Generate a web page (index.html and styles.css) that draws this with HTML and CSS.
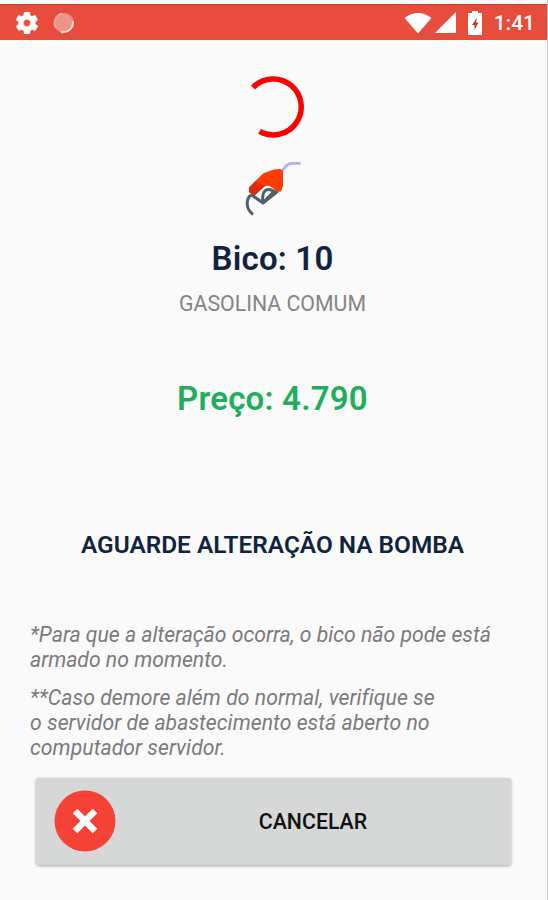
FILE: index.html
```html
<!DOCTYPE html>
<html lang="pt-BR">
  <head>
    <meta charset="UTF-8" />
    <meta name="viewport" content="width=device-width, initial-scale=1.0" />
    <title>Alteração de preço</title>
    <link rel="stylesheet" href="styles.css">
  </head>
  <body>
    <div class="screen">
      <header class="status-bar">
        <svg class="icon-gear" viewBox="2 2 20 20" width="22" height="22">
          <path fill="#fff" stroke="#fff" stroke-width=".5" d="M19.4 13c0-.3.1-.6.1-1s0-.7-.1-1l2.1-1.6c.2-.2.2-.4.1-.6l-2-3.5c-.1-.2-.4-.3-.6-.2l-2.5 1c-.5-.4-1.1-.7-1.7-1l-.4-2.6c0-.3-.2-.5-.5-.5h-4c-.2 0-.4.2-.5.4l-.4 2.7c-.6.2-1.1.6-1.7 1l-2.5-1c-.2-.1-.5 0-.6.2l-2 3.5c-.1.2-.1.5.1.6L4.5 11c0 .3-.1.6-.1 1s0 .7.1 1l-2.1 1.6c-.2.2-.2.4-.1.6l2 3.5c.1.2.4.3.6.2l2.5-1c.5.4 1.1.7 1.7 1l.4 2.6c0 .3.2.5.5.5h4c.2 0 .5-.2.5-.4l.4-2.7c.6-.2 1.2-.6 1.7-1l2.5 1c.2.1.5 0 .6-.2l2-3.5c.1-.2.1-.5-.1-.6L19.4 13zM12 15.3a3.3 3.3 0 1 1 0-6.6 3.3 3.3 0 0 1 0 6.6z" />
        </svg>
        <svg class="icon-sync" viewBox="0 0 22 22" width="22" height="22">
          <circle cx="11" cy="11" r="10" fill="#ee938a" />
          <path d="M20 9a10 10 0 0 1-12 11" fill="none" stroke="#ffd9d4" stroke-width="1.8" />
          <path d="M3 16A9.5 9.5 0 0 1 9 1.5" fill="none" stroke="#f2aaa3" stroke-width="1.5" />
        </svg>
        <div class="status-right">
          <svg class="icon-wifi" viewBox="0 0 28 22" width="28" height="22">
            <path fill="#fff" d="M.5 6Q14-4 27.5 6L14 21.5z" />
          </svg>
          <svg class="icon-signal" viewBox="0 0 21 21" width="21" height="21">
            <path fill="#fff" d="M21 0v21H0z" />
          </svg>
          <svg class="icon-battery" viewBox="0 0 14 24" width="14" height="24">
            <path fill="#fff" d="M4 0h6v2h3q1 0 1 1v20q0 1-1 1H1q-1 0-1-1V3q0-1 1-1h3z" />
            <path fill="#c0392b" d="M9 6.5L4 14h2.5v5l4-7.5H8z" />
          </svg>
          <span class="clock">1:41</span>
        </div>
      </header>

      <main class="content">
        <svg class="spinner" viewBox="0 0 62 62" width="62" height="62">
          <path d="M11 11.5A28 28 0 1 1 17.5 55.3" fill="none" stroke="#fe0000" stroke-width="5.5" />
        </svg>

        <svg class="nozzle" viewBox="0 0 58 56" width="58" height="56">
          <path d="M38 11L42.500 5.500Q44.500 3.300 47.500 3.300H56.500" fill="none" stroke="#b0b5e3" stroke-width="2.800" />
          <path d="M5 27.500L18 14.500Q20 12.500 23 12L30 9.500L36.500 9 39 11.500V26L37 31.500 33 32 28 27.500Q24 24.500 20 27L10 36 5 32z" fill="#fd3d04" />
          <path d="M5 27.500L11.500 21l9 5-10.500 10L5 32z" fill="#dc2b08" />
          <path d="M7 35Q3 38 3.200 44T9 54.500M7 34.500L19 43 33.500 31.500M18.700 42.500Q18 33 21.500 30.500t8.500 1L19 42.500" fill="none" stroke="#4f616d" stroke-width="3" stroke-linejoin="round" />
        </svg>

        <h1 class="pump">Bico: 10</h1>
        <p class="fuel">GASOLINA COMUM</p>
        <p class="price">Preço: 4.790</p>
        <h2 class="waiting">AGUARDE ALTERAÇÃO NA BOMBA</h2>

        <div class="notes">
          <p>*Para que a alteração ocorra, o bico não pode está<br>armado no momento.</p>
          <p>**Caso demore além do normal, verifique se<br>o servidor de abastecimento está aberto no<br>computador servidor.</p>
        </div>

        <button class="cancel" type="button">
          <svg class="cancel-icon" viewBox="0 0 62 62" width="62" height="62">
            <circle cx="31" cy="31" r="30.5" fill="#f44336" />
            <path d="M21 21l20 20m0-20l-20 20" stroke="#fff" stroke-width="6.5" />
          </svg>
          <span class="cancel-label">CANCELAR</span>
        </button>
      </main>
    </div>
  </body>
</html>
```

FILE: styles.css
```css
* {
  box-sizing: border-box;
}
body {
  margin: 0;
  font-family: Roboto, sans-serif;
  background-color: #fafafa;
}
.screen {
  height: 900px;
  padding-top: 4px;
  border-right: 1px solid #cfcbc9;
  overflow: hidden;
}
.status-bar {
  display: flex;
  align-items: center;
  height: 36px;
  padding: 0 12px 0 16px;
  background-color: #e74c3c;
  border-top: 1px solid #d33a2b;
}
.icon-sync {
  margin-left: 15px;
}
.status-right {
  display: flex;
  align-items: center;
  margin-left: auto;
  color: #fff;
}
.icon-signal {
  margin-left: 3px;
}
.icon-battery {
  margin-left: 12px;
}
.clock {
  margin-left: 12px;
  font-size: 21px;
  font-weight: 500;
}
.content {
  display: flex;
  flex-direction: column;
  align-items: center;
}
.spinner {
  margin-top: 36px;
  margin-right: 2px;
}
.nozzle {
  margin-top: 22px;
  margin-right: 2px;
}
.pump,
.fuel,
.price,
.waiting,
.notes p {
  margin: 0;
  white-space: nowrap;
}
.pump {
  margin-top: 23px;
  padding-right: 2px;
  line-height: 40px;
  font-size: 33px;
  font-weight: 600;
  letter-spacing: 0.2px;
  color: #10243e;
}
.fuel {
  margin-top: 12px;
  padding-right: 2px;
  line-height: 26px;
  font-size: 21.3px;
  color: #858585;
}
.price {
  margin-top: 62px;
  padding-right: 2px;
  line-height: 40px;
  font-size: 33px;
  font-weight: 600;
  letter-spacing: 0.2px;
  color: #1fae5b;
}
.waiting {
  margin-top: 112px;
  padding-right: 2px;
  line-height: 28px;
  font-size: 24.4px;
  font-weight: 600;
  color: #10243e;
}
.notes {
  align-self: stretch;
  margin-top: 63px;
  padding-left: 30px;
  line-height: 25px;
  font-size: 21.2px;
  font-style: italic;
  color: #7b7b7b;
}
.notes p + p {
  margin-top: 13px;
  letter-spacing: 0.05px;
}
.cancel {
  display: flex;
  align-items: center;
  align-self: stretch;
  height: 87px;
  margin: 18px 36px 0 36px;
  padding: 0 18px 1px;
  border: none;
  border-radius: 3px;
  background-color: #d6d7d7;
  box-shadow: 0 1px 3px rgba(0, 0, 0, 0.35);
  font-family: inherit;
  color: #111;
}
.cancel-label {
  flex: 1;
  padding-left: 17px;
  text-align: center;
  font-size: 21.3px;
  font-weight: 500;
}
```
